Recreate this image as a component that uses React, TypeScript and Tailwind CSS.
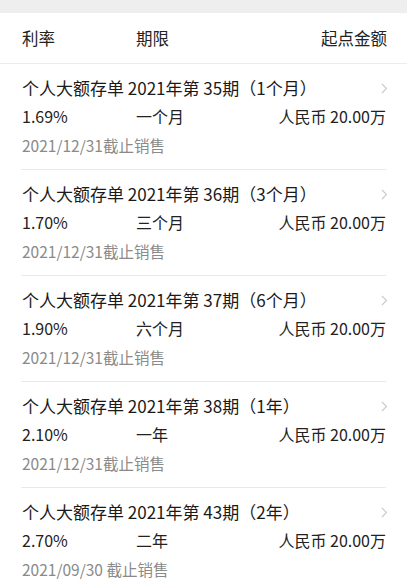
const items = [
  { title: '个人大额存单 2021年第 35期（1个月）', rate: '1.69%', term: '一个月', date: '2021/12/31截止销售' },
  { title: '个人大额存单 2021年第 36期（3个月）', rate: '1.70%', term: '三个月', date: '2021/12/31截止销售' },
  { title: '个人大额存单 2021年第 37期（6个月）', rate: '1.90%', term: '六个月', date: '2021/12/31截止销售' },
  { title: '个人大额存单 2021年第 38期（1年）', rate: '2.10%', term: '一年', date: '2021/12/31截止销售' },
  { title: '个人大额存单 2021年第 43期（2年）', rate: '2.70%', term: '二年', date: '2021/09/30 截止销售' },
]

function Chevron() {
  return (
    <svg width="7" height="11" viewBox="0 0 7 11" className="absolute right-[19px] top-[19px]">
      <path d="M1 1l4.5 4.5L1 10" fill="none" stroke="#c9c9c9" strokeWidth="1.1" />
    </svg>
  )
}

export default function App() {
  return (
    <div className="h-[585px] w-[407px] overflow-hidden bg-white font-['Noto_Sans_CJK_SC','Noto_Sans',sans-serif]">
      <div className="h-[13px] bg-[#eeeeee]" />
      <div className="flex h-[51px] items-center border-b border-[#ececec] pl-[22px] pr-[20px] text-[16.5px] text-[#222]">
        <span className="w-[114px]">利率</span>
        <span className="flex-1">期限</span>
        <span>起点金额</span>
      </div>

      {items.map((item) => (
        <div key={item.title} className="relative px-[21px]">
          <div className="border-b border-[#e9e9e9] pb-[12px] pl-px pt-[12px]">
            <div className="h-6 text-[17px] leading-6 text-[#1a1a1a]">{item.title}</div>
            <div className="mt-1 flex h-6 items-center text-[16px] text-[#222]">
              <span className="w-[114px]">{item.rate}</span>
              <span className="flex-1">{item.term}</span>
              <span>人民币 20.00万</span>
            </div>
            <div className="mt-[5px] h-6 text-[15.5px] leading-6 text-[#8a8a8a]">{item.date}</div>
          </div>
          <Chevron />
        </div>
      ))}
    </div>
  )
}
